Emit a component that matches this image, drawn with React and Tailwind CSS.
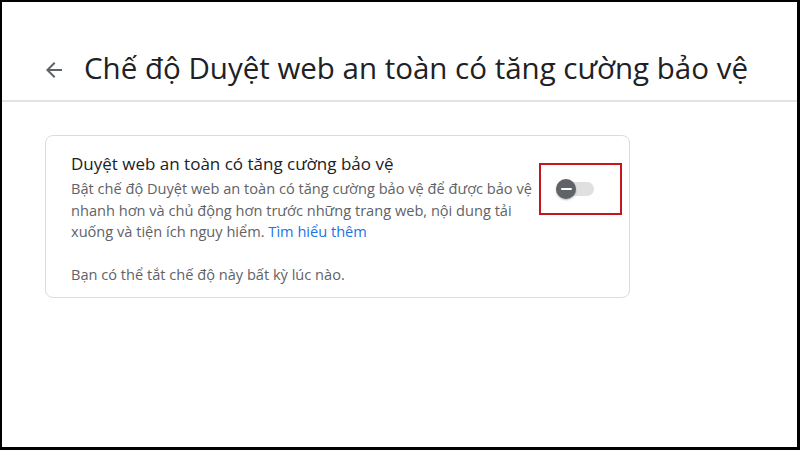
export default function App() {
  return (
    <div className="w-[800px] h-[450px] bg-black pt-[2px] pl-[2px] pr-[3px] pb-[3px]" style={{ fontFamily: "'Open Sans', 'Noto Sans', sans-serif" }}>
      <div className="w-full h-full bg-white flex flex-col">
        <div className="h-[98px] flex items-end pb-[12px] pl-[40px]">
          <svg width="24" height="24" viewBox="0 0 24 24" className="mb-[6px]">
            <path d="M20 11H7.83l5.59-5.59L12 4l-8 8 8 8 1.41-1.41L7.83 13H20v-2z" fill="#5f6368" />
          </svg>
          <h1 className="ml-[18px] text-[29.5px] leading-[40px] text-[#202124] whitespace-nowrap">
            Chế độ Duyệt web an toàn có tăng cường bảo vệ
          </h1>
        </div>
        <div className="h-[2px] bg-[#e3e3e3]" />
        <div className="pl-[43px] pt-[33px]">
          <div className="w-[585px] h-[163px] border border-[#dadce0] rounded-[8px] flex pl-[25px] pt-[16px]">
            <div className="w-[470px] whitespace-nowrap">
              <div className="text-[17px] leading-[24px] text-[#202124]">Duyệt web an toàn có tăng cường bảo vệ</div>
              <div className="text-[14.6px] leading-[21.5px] text-[#5f6368] mt-[2px]">
                Bật chế độ Duyệt web an toàn có tăng cường bảo vệ để được bảo vệ<br />
                nhanh hơn và chủ động hơn trước những trang web, nội dung tải<br />
                xuống và tiện ích nguy hiểm. <span className="text-[#1a73e8]">Tìm hiểu thêm</span>
              </div>
              <div className="text-[14.6px] leading-[21.5px] text-[#5f6368] mt-[21px]">Bạn có thể tắt chế độ này bất kỳ lúc nào.</div>
            </div>
            <div className="ml-[-2px] mt-[11px] w-[83px] h-[52px] border-2 border-[#c4161c] flex items-center pl-[15px]">
              <div className="relative w-[40px] h-[20px] flex items-center">
                <div className="absolute left-[10px] w-[28px] h-[14px] rounded-full bg-[#e0e0e0]" />
                <div className="relative w-[20px] h-[20px] rounded-full bg-[#5f6368] shadow-[0_1px_2px_rgba(0,0,0,0.3)] flex items-center justify-center">
                  <div className="w-[11px] h-[2px] bg-white rounded" />
                </div>
              </div>
            </div>
          </div>
        </div>
      </div>
    </div>
  );
}
